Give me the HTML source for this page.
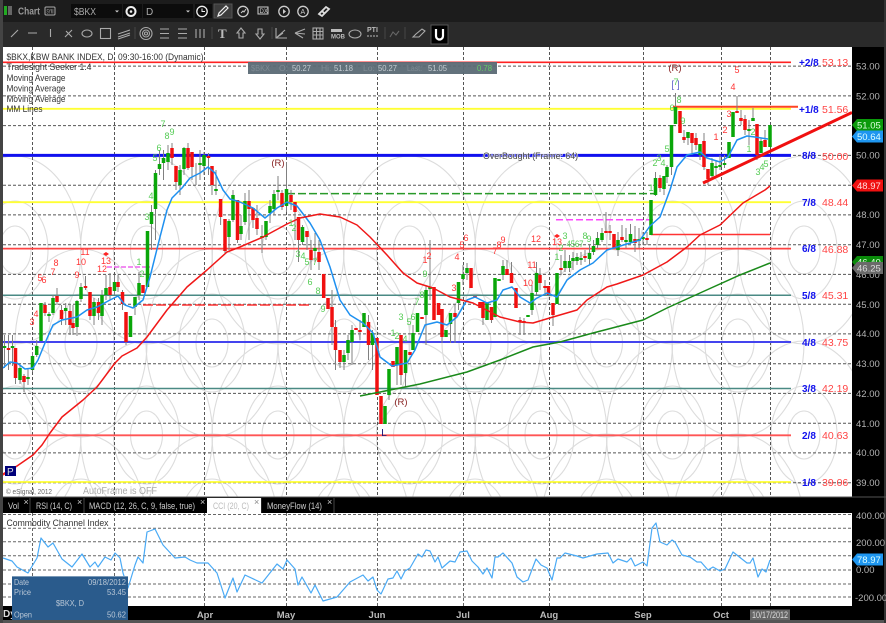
<!DOCTYPE html>
<html><head><meta charset="utf-8"><style>
html,body{margin:0;padding:0;background:#111;width:886px;height:623px;overflow:hidden}
svg{display:block;font-family:"Liberation Sans",sans-serif}
.r text{fill:#f33;font-size:9px;text-anchor:middle}
.g text{fill:#5c5;font-size:9px;text-anchor:middle}
.ax text{fill:#b4b4b4;font-size:9.5px}
.mm text{fill:#11e;font-size:10px;font-weight:bold}
.mv text{fill:#f44;font-size:10.5px}
.ic{fill:none;stroke:#aaa;stroke-width:1.1}
.leg text{fill:#333;font-size:9.5px}
.tab text{fill:#ccc;font-size:9px}
.tt text{fill:#b9c7d6;font-size:8.5px}
.q text{fill:#c4ccd2;font-size:8.5px}
.q .d{fill:#7f8b94}
</style></head><body>
<svg width="886" height="623" viewBox="0 0 886 623">
<rect width="886" height="623" fill="#000"/>
<rect width="886" height="22" fill="#1c1c1c"/>
<rect y="22" width="886" height="25" fill="#2a2a2a"/>
<rect y="620" width="886" height="3" fill="#555"/>
<rect x="0" y="0" width="3" height="623" fill="#444"/>
<rect x="884" y="0" width="2" height="623" fill="#333"/>
<!-- top row -->
<rect x="4" y="6" width="3" height="9" fill="#2a2"/><rect x="8" y="6" width="4" height="9" fill="#666"/>
<text x="18" y="14.500" fill="#999" font-size="10" font-weight="bold" textLength="22" lengthAdjust="spacingAndGlyphs">Chart</text>
<rect x="45" y="7" width="10" height="8" rx="1" fill="none" stroke="#aaa"/><text x="46.500" y="13.500" fill="#aaa" font-size="6" textLength="7" lengthAdjust="spacingAndGlyphs">SYM</text>
<rect x="71" y="4" width="51" height="14" fill="#0c0c0c"/><text x="74" y="15" fill="#aaa" font-size="10" textLength="22" lengthAdjust="spacingAndGlyphs">$BKX</text><path d="M115 10.500h4l-2 2z" fill="#ccc"/>
<rect x="123" y="4" width="19" height="14" fill="#0c0c0c"/>
<circle cx="131" cy="11.500" r="4.500" fill="none" stroke="#eee" stroke-width="2"/><circle cx="131" cy="11.500" r="1.300" fill="#eee"/>
<rect x="143" y="4" width="50" height="14" fill="#0c0c0c"/><text x="146" y="15" fill="#aaa" font-size="10">D</text><path d="M186 10.500h4l-2 2z" fill="#ccc"/>
<rect x="195" y="4" width="17" height="14" fill="#0c0c0c"/>
<circle cx="202" cy="11.500" r="5.200" fill="none" stroke="#eee" stroke-width="1.300"/><path d="M202 8.500v3h3" fill="none" stroke="#eee"/>
<rect x="214" y="4" width="18" height="14" fill="#3c3c3c" stroke="#555"/><path d="M218 16l1-3 7-7 2 2-7 7z" fill="none" stroke="#eee" stroke-width="1.200"/>
<circle cx="243" cy="11.500" r="5.200" fill="none" stroke="#ccc" stroke-width="1.300"/><path d="M241 13l2-2 1 1 2-3" fill="none" stroke="#ccc"/>
<rect x="258" y="7" width="10" height="7" fill="none" stroke="#ccc"/><text x="259.500" y="13" fill="#ccc" font-size="6">DX</text>
<circle cx="284" cy="11.500" r="5.200" fill="none" stroke="#ccc" stroke-width="1.300"/><path d="M283 9l3 2.500-3 2.500z" fill="#ccc"/>
<circle cx="303" cy="11.500" r="5.200" fill="none" stroke="#ccc" stroke-width="1.300"/><text x="300.500" y="14" fill="#ccc" font-size="7">A</text>
<path d="M319 14l3 2 7-7-3-2zM322 11l2 2" fill="none" stroke="#ddd" stroke-width="1.800"/>
<!-- second row -->
<g class="ic">
<path d="M11 37l7-7M28 33h9M50.500 29v8M65 37l7-7M66 31l6 6"/>
<ellipse cx="87" cy="33.500" rx="5" ry="3.500"/><rect x="100.500" y="28.500" width="10" height="10"/>
<path d="M118 37l12-4M118 34l12-4M118 39l12-4"/>
<circle cx="146" cy="33.500" r="6"/><circle cx="146" cy="33.500" r="3.500"/><circle cx="146" cy="33.500" r="1.500"/>
<path d="M160 29h9M160 33.500h9M160 38h9M178 29h9M178 33.500h9M178 38h9M196 29v9M200 29v9M204 29v9"/>
<path d="M241 28l4 5h-2v5h-4v-5h-2zM260 39l4-5h-2v-5h-4v5h-2z"/>
<path d="M276 28v10h11M276 38l9-8M276 38l7-5"/>
<path d="M295 33l10-4M295 33l10 1M295 33l8 5"/>
<rect x="313" y="28" width="10" height="11"/><path d="M313 31.500h10M313 35h10M316.500 28v11M320 28v11"/>
<ellipse cx="355" cy="34" rx="6" ry="4"/>
<path d="M390 37l3-5 3 3 3-4" stroke="#666"/><path d="M413 37l3-3 6-5 3 2-6 6z"/>
<path d="M135 27v12M212 27v12M272 27v12M385 27v12M405 27v12" stroke="#444"/>
</g>
<text x="218" y="38" fill="#bbb" font-size="13" font-family="Liberation Serif" font-weight="bold">T</text>
<rect x="331" y="29" width="11" height="3" fill="#bbb"/><text x="331" y="38.500" fill="#bbb" font-size="6" font-weight="bold">MOB</text>
<text x="367" y="32" fill="#bbb" font-size="7" font-weight="bold">PTI</text><path d="M367 36h12" stroke="#bbb" stroke-dasharray="2 1"/>
<rect x="431" y="25" width="17" height="19" fill="#000" stroke="#555"/><path d="M436 29v7a3.500 3.500 0 0 0 7 0v-7" fill="none" stroke="#fff" stroke-width="2.200"/>

<!-- panes -->
<rect x="3" y="47" width="849" height="450" fill="#fff"/>
<rect x="3" y="513" width="849" height="93" fill="#fff"/>
<clipPath id="c"><rect x="3" y="47" width="849" height="450"/></clipPath>
<g clip-path="url(#c)">
<!-- ellipses -->
<defs><g id="e"><ellipse rx="16" ry="24"/><ellipse rx="33" ry="49"/><ellipse rx="66" ry="94"/></g></defs>
<g fill="none" stroke="#dcdcdc" stroke-width="1.100">
<use href="#e" x="15" y="250"/><use href="#e" x="146.500" y="250"/><use href="#e" x="278" y="250"/><use href="#e" x="409.500" y="250"/><use href="#e" x="541" y="250"/><use href="#e" x="672.500" y="250"/><use href="#e" x="804" y="250"/>
<use href="#e" x="15" y="435"/><use href="#e" x="146.500" y="435"/><use href="#e" x="278" y="435"/><use href="#e" x="409.500" y="435"/><use href="#e" x="541" y="435"/><use href="#e" x="672.500" y="435"/><use href="#e" x="804" y="435"/>
<use href="#e" x="81" y="343"/><use href="#e" x="212" y="343"/><use href="#e" x="344" y="343"/><use href="#e" x="475" y="343"/><use href="#e" x="606.500" y="343"/><use href="#e" x="738" y="343"/>
<use href="#e" x="81" y="528"/><use href="#e" x="212" y="528"/><use href="#e" x="344" y="528"/><use href="#e" x="475" y="528"/><use href="#e" x="606.500" y="528"/><use href="#e" x="738" y="528"/>
</g>
<!-- grid -->
<path d="M3 66.100H852M3 95.900H852M3 125.600H852M3 155.400H852M3 185.200H852M3 214.900H852M3 244.700H852M3 274.400H852M3 304.200H852M3 333.900H852M3 363.700H852M3 393.400H852M3 423.200H852M3 452.900H852M3 482.700H852M32.500 47V497M114.500 47V497M204.500 47V497M286.500 47V497M377.500 47V497M463.500 47V497M549.500 47V497M643.500 47V497M721.500 47V497M770.500 47V497" stroke="#555" stroke-dasharray="3 2" fill="none"/>
<!-- MM lines -->
<g fill="none">
<path d="M3 62.300H791" stroke="#f22" stroke-width="1.600"/>
<path d="M3 108.800H791" stroke="#ff3" stroke-width="1.800"/>
<path d="M3 155.400H791" stroke="#11e" stroke-width="3"/>
<path d="M3 202.200H791" stroke="#ff3" stroke-width="1.800"/>
<path d="M3 248.600H791" stroke="#f44" stroke-width="1.800"/>
<path d="M3 295.300H791" stroke="#4a8a84" stroke-width="1.500"/>
<path d="M3 342H791" stroke="#44e" stroke-width="2"/>
<path d="M3 388.500H791" stroke="#4a8a84" stroke-width="1.500"/>
<path d="M3 435.300H791" stroke="#f55" stroke-width="1.800"/>
<path d="M3 482H791" stroke="#ff3" stroke-width="1.800"/>
<path d="M673 106.800H798" stroke="#f42" stroke-width="2"/>
<path d="M651 234.500H770" stroke="#f33" stroke-width="1.500"/>
<path d="M287 193.600H655" stroke="#2a9a2a" stroke-width="1.500" stroke-dasharray="8 3"/>
<path d="M556 219.800H655" stroke="#f4f" stroke-width="1.500" stroke-dasharray="7 3"/>
<path d="M107 267H150" stroke="#e6e" stroke-width="1.500" stroke-dasharray="5 2"/>
<path d="M143 305H312" stroke="#f33" stroke-width="1.500" stroke-dasharray="10 3"/>
</g>
<!-- wicks -->
<path fill="none" stroke="#808080" stroke-width="1" d="M4.500 335V368M8.500 335V370M12.500 335V366M15.500 348V384M20 365V384M24 374V392M28 368V385M32.500 352V372M36.700 340V357M45 302V316M49 312V322M53 295V315M57 288V305M61.500 305V325M65.700 303V325M70 305V335M73 305V335M77 300V336M81 283V302M85.500 276V290M90 292V320M94 298V325M98.500 298V320M102 290V325M106 275V300M110 273V300M114.500 275V295M118 275V292M122.500 290V310M126 312V345M135 297V315M139 272V300M151.500 205V250M155.500 170V240M159.500 150V175M163.500 150V180M168 145V170M172 143V165M176 166V190M180 165V195M184 147V175M188 143V170M192 152V180M196 163V185M200 150V180M204 152V175M208.500 153V175M212 166V195M216 170V195M220.600 199V225M225 219V253M229 219V250M233 190V222M237.500 200V243M241 215V240M245 193V225M249 190V240M253 208V228M257 205V235M262 225V253M266 221V240M270 200V223M274 190V215M278 176V200M282 190V210M286.500 162V212M291 190V210M295 202V240M298.500 217V262M302.500 225V245M307 231V250M311 240V270M315 233V262M319 240V270M332 290V345M335.500 320V370M340 350V368M344 350V370M348 335V360M352 325V365M360 320V340M368.500 315V360M372.500 330V370M385 406V424M389 369V400M397 347V385M401 335V385M405.500 350V387M413 325V350M426 285V345M430 240V300M442 309V343M450.500 313V343M455 305V343M458.500 282V310M463 265V285M467 263V280M483 302V325M491.500 307V323M503 260V280M507 260V275M511.500 262V283M520 317V335M524 318V335M532 285V315M536.500 262V295M540 268V290M545 280V295M553 303V326M561 255V275M565 250V272M569.500 255V272M573 252V270M577 253V265M581 252V265M585 250V262M589.500 245V265M593.500 240V255M597.500 232V248M602 228V242M606 212V232M610 225V240M614 234V248M618 232V256M622 225V242M626 228V248M630.500 224V245M635 226V252M639 228V248M643 232V245M647 232V245M655.500 172V196M660 175V192M664 176V195M667 165V183M671.500 125V175M675.500 93V124M684 130V143M688 132V145M692 133V155M696 133V150M700 144V160M704 133V170M708 169V185M712 158V180M716 160V175M720 155V170M724.500 155V168M737 96V113M741 110V125M745 115V135M749 120V145M753 108V121M757 124V160M761 138V153M765 130V147"/>
<!-- green bodies -->
<path fill="none" stroke="#09a609" stroke-width="3.500" d="M4.500 346V348M12.500 346V348M20 368V380M28 377V379M32.500 356V370M36.700 346V355M41 303V341M49 314V316M53 298V313M65.700 308V311M77 301V327M81 287V299M94 302V316M102 295V316M106 288V295M114.500 282V291M130.500 316V337M135 297V307M139 283V295M147.500 231V287M151.500 212V224M155.500 173V209M159.500 164V169M163.500 158V163M168 153V162M180 170V185M184 148V169M200 163V165M204 155V166M216 189V191M229 221V237M233 195V220M241 226V234M245 201V222M262 236V238M266 221V237M270 206V213M274 194V209M278 190V192M286.500 189V206M302.500 227V242M315 248V251M344 355V362M348 340V353M352 330V342M364 313V327M372.500 333V345M385 406V424M389 369V395M397 347V365M405.500 350V373M413 333V350M417.500 313V332M426 290V315M430 287V289M446 330V337M450.500 313V324M458.500 282V303M463 274V279M467 268V273M487 303V320M495 278V317M499 279V281M503 266V275M528 315V317M532 293V310M536.500 273V292M557 273V304M565 261V268M569.500 261V268M573 258V261M577 257V261M581 258V260M589.500 253V259M593.500 246V252M597.500 238V245M602 233V240M618 240V250M626 240V242M630.500 234V242M639 239V241M643 237V239M651 200V235M655.500 178V195M664 176V189M667 167V177M671.500 125V167M675.500 107V124M688 132V138M700 144V155M712 163V176M716 166V168M720 165V167M724.500 163V165M729 142V158M733 112V137M749 129V131M753 118V121M761 141V153M770 125V147"/>
<!-- red bodies -->
<path fill="none" stroke="#f01010" stroke-width="3.500" d="M8.500 348V350M15.500 348V378M24 376V382M45 305V313M57 296V302M61.500 310V319M70 311V325M73 323V328M85.500 286V288M90 292V316M98.500 302V313M110 287V295M118 282V287M122.500 292V304M126 312V342M143 285V293M172 148V158M176 166V182M188 148V168M192 152V167M208.500 156V158M212 166V185M220.600 199V217M225 219V251M237.500 200V240M249 201V209M253 208V220M257 218V229M282 193V207M291 195V202M295 202V212M298.500 217V240M307 231V237M311 250V260M319 252V262M323.700 274V298M328 298V309M332 307V327M335.500 327V350M340 350V362M356 328V330M360 330V332M368.500 322V345M377 338V395M381 396V424M393 361V367M401 335V375M410 352V355M422 317V319M434 287V320M438.500 303V315M442 309V337M455 313V317M471 268V288M475 296V298M480 302V308M483 302V318M491.500 307V320M507 269V275M511.500 273V283M516 288V308M520 320V322M524 321V323M540 275V283M545 286V288M548.500 286V295M553 303V315M561 268V270M585 256V258M606 231V233M610 231V233M614 234V248M622 237V240M635 239V243M647 238V240M660 178V188M680 111V133M684 137V140M692 133V143M696 138V145M704 141V167M708 169V179M737 111V113M741 118V121M745 119V130M757 124V155M765 140V147"/>
<!-- MAs -->
<path fill="none" stroke="#1e90f0" stroke-width="1.500" stroke-linejoin="round" d="M3 368L10 362L17 363L25 369L33 368L38 360L45 343L53 325L62 320L77 317L87 310L97 307L110 300L118 296L125 305L133 308L143 300L150 277L160 237L167 210L172 198L182 188L190 178L200 173L208 167L215 173L223 190L230 199L240 202L253 208L265 218L277 208L287 202L297 206L310 223L320 240L330 267L340 300L350 315L363 323L373 333L380 357L392 366L407 363L415 350L425 325L437 322L447 325L457 317L467 300L475 297L487 303L497 300L503 290L512 287L520 297L530 303L537 298L547 293L557 297L567 280L580 270L593 263L607 250L617 247L640 240L650 226L660 217L670 190L677 167L687 155L700 152L707 158L720 162L728 157L737 140L747 136L755 137L768 139"/>
<path fill="none" stroke="#f01818" stroke-width="1.500" stroke-linejoin="round" d="M3 474L17 466L33 455L42 445L50 433L62 417L83 400L97 387L115 363L122 356L137 348L147 337L167 310L187 287L207 270L227 252L240 247L263 237L287 224L300 218L320 214L340 217L357 225L370 237L387 255L403 273L417 283L433 288L450 297L473 303L500 317L520 322L533 323L553 317L577 310L587 300L607 287L617 284L643 275L667 262L687 247L700 235L720 225L743 203L765 190L770 186"/>
<path fill="none" stroke="#1a8a1a" stroke-width="1.500" d="M360 396L420 384L467 372L500 360L533 347L560 342L593 333L643 320L667 308L700 293L740 275L770 263"/>
<path fill="none" stroke="#f01010" stroke-width="3" d="M703 183L852 112.500"/>
<path d="M106 252l3 2-3 2-3-2zM557 234l3 2-3 2-3-2z" fill="#f22"/>
<!-- numbers -->
<g class="r">
<text x="32" y="325">3</text><text x="36" y="317">4</text><text x="40" y="281">5</text><text x="44" y="283">6</text><text x="53" y="275">7</text><text x="56" y="266">8</text><text x="77" y="278">9</text><text x="81" y="265">10</text><text x="85" y="255">11</text><text x="102" y="272">12</text><text x="106" y="264">13</text>
<text x="425" y="263">1</text><text x="429" y="259">2</text><text x="454" y="291">3</text><text x="457" y="260">4</text><text x="462" y="248">5</text><text x="466" y="241">6</text><text x="495" y="254">7</text><text x="499" y="248">8</text><text x="503" y="243">9</text><text x="528" y="286">10</text><text x="532" y="268">11</text><text x="536" y="242">12</text><text x="557" y="245">13</text>
<text x="716" y="140">1</text><text x="725" y="133">2</text><text x="729" y="117">3</text><text x="733" y="90">4</text><text x="737" y="73">5</text>
</g>
<g class="g">
<text x="139" y="265">1</text><text x="142" y="277">2</text><text x="147" y="220">3</text><text x="151" y="199">4</text><text x="155" y="161">5</text><text x="159" y="151">6</text><text x="163" y="127">7</text><text x="167" y="139">8</text><text x="172" y="135">9</text>
<text x="291" y="226">1</text><text x="294" y="231">2</text><text x="298" y="257">3</text><text x="303" y="259">4</text><text x="307" y="265">5</text><text x="315" y="265">7</text><text x="310" y="285">6</text><text x="318" y="294">8</text><text x="323" y="312">9</text>
<text x="393" y="336">1</text><text x="397" y="339">2</text><text x="401" y="320">3</text><text x="405" y="342">4</text><text x="409" y="325">5</text><text x="413" y="320">6</text><text x="417" y="305">7</text><text x="422" y="298">8</text><text x="425" y="277">9</text>
<text x="557" y="260">1</text><text x="561" y="251">2</text><text x="565" y="239">3</text><text x="575" y="247" textLength="17" lengthAdjust="spacingAndGlyphs">4567</text><text x="585" y="239">8</text><text x="589" y="242">9</text>
<text x="651" y="191">1</text><text x="655" y="166">2</text><text x="659" y="161">3</text><text x="663" y="166">4</text><text x="667" y="152">5</text><text x="672" y="111">6</text><text x="676" y="85">7</text><text x="679" y="103">8</text><text x="683" y="124">9</text>
<text x="749" y="152">1</text><text x="753" y="135">2</text><text x="758" y="175">3</text><text x="762" y="170">4</text><text x="766" y="167">5</text>
</g>
<text x="675" y="71" fill="#822" font-size="9.500" text-anchor="middle">(R)</text>
<text x="278" y="166" fill="#822" font-size="9.500" text-anchor="middle">(R)</text>
<text x="401" y="405" fill="#822" font-size="9.500" text-anchor="middle">(R)</text>
<text x="384" y="436" fill="#117" font-size="10" text-anchor="middle">L</text>
<text x="675.500" y="88" fill="#66c" font-size="10" text-anchor="middle">[ ]</text>
<!-- OverBought -->
<text x="483" y="159" fill="#444" font-size="9.500" textLength="95" lengthAdjust="spacingAndGlyphs" stroke="#fff" stroke-width="1.500" paint-order="stroke" stroke-opacity=".7">OverBought (Frame: 64)</text>
<!-- Quote bar -->
<rect x="248" y="62" width="249" height="12" fill="#5b6a75" fill-opacity=".95"/>
<g class="q"><text class="d" x="251" y="71" textLength="19" lengthAdjust="spacingAndGlyphs">$BKX</text><text class="d" x="279" y="71">O:</text><text x="292" y="71" textLength="19" lengthAdjust="spacingAndGlyphs">50.27</text><text class="d" x="321" y="71">Hi:</text><text x="334" y="71" textLength="19" lengthAdjust="spacingAndGlyphs">51.18</text><text class="d" x="363" y="71">Lo:</text><text x="378" y="71" textLength="19" lengthAdjust="spacingAndGlyphs">50.27</text><text class="d" x="407" y="71" textLength="15" lengthAdjust="spacingAndGlyphs">Last:</text><text x="428" y="71" textLength="19" lengthAdjust="spacingAndGlyphs">51.05</text><text x="477" y="71" style="fill:#6c6" textLength="15" lengthAdjust="spacingAndGlyphs">0.78</text></g>
<!-- legend -->
<g class="leg">
<text x="6.500" y="60" textLength="197" lengthAdjust="spacingAndGlyphs">$BKX,KBW BANK INDEX, D, 09:30-16:00 (Dynamic)</text>
<text x="6.500" y="70" textLength="85" lengthAdjust="spacingAndGlyphs">Tradesight Seeker 1.4</text>
<text x="6.500" y="81" textLength="59" lengthAdjust="spacingAndGlyphs">Moving Average</text>
<text x="6.500" y="91.500" textLength="59" lengthAdjust="spacingAndGlyphs">Moving Average</text>
<text x="6.500" y="102" textLength="59" lengthAdjust="spacingAndGlyphs">Moving Average</text>
<text x="6.500" y="112" textLength="36" lengthAdjust="spacingAndGlyphs">MM Lines</text>
</g>
<!-- P + copyright -->
<path d="M3 475L17 466" stroke="#f22" stroke-width="1.500"/>
<rect x="5" y="466" width="11" height="10" fill="#00007a"/><text x="7" y="475" fill="#ddd" font-size="10">P</text>
<text x="6" y="494" fill="#666" font-size="7.500" textLength="46" lengthAdjust="spacingAndGlyphs">© eSignal, 2012</text>
<text x="83" y="494" fill="#aaa" font-size="10" textLength="74" lengthAdjust="spacingAndGlyphs">AutoFrame is OFF</text>
</g>
<!-- MM labels -->
<g class="mm">
<text x="799" y="66">+2/8</text><text x="799" y="113">+1/8</text><text x="802" y="159">8/8</text><text x="802" y="206">7/8</text><text x="802" y="252">6/8</text><text x="802" y="299">5/8</text><text x="802" y="346">4/8</text><text x="802" y="392">3/8</text><text x="802" y="439">2/8</text><text x="802" y="486">1/8</text>
</g>
<g class="mv">
<text x="822" y="66">53.13</text><text x="822" y="113">51.56</text><text x="822" y="160">50.00</text><text x="822" y="206">48.44</text><text x="822" y="253">46.88</text><text x="822" y="299">45.31</text><text x="822" y="346">43.75</text><text x="822" y="392">42.19</text><text x="822" y="439">40.63</text><text x="822" y="486">39.06</text>
</g>
<!-- axis -->
<g class="ax">
<text x="856" y="69.500">53.00</text><text x="856" y="99.500">52.00</text><text x="856" y="158.500">50.00</text><text x="856" y="218">48.00</text><text x="856" y="248">47.00</text><text x="856" y="278">46.00</text><text x="856" y="308">45.00</text><text x="856" y="337">44.00</text><text x="856" y="367">43.00</text><text x="856" y="397">42.00</text><text x="856" y="427">41.00</text><text x="856" y="456">40.00</text><text x="856" y="486">39.00</text>
<text x="856" y="519">400.00</text><text x="856" y="546">200.00</text><text x="856" y="573">0.00</text><text x="855" y="601">-200.00</text>
</g>
<g font-size="9.500">
<path d="M852 125l5-6h26v12h-26z" fill="#0a9a0a"/><text x="857" y="128.500" fill="#dfd">51.05</text>
<path d="M852 136.500l5-6h26v12h-26z" fill="#1e96f0"/><text x="857" y="140" fill="#dff">50.64</text>
<path d="M852 185.500l5-6h26v12h-26z" fill="#f01010"/><text x="857" y="189" fill="#fdd">48.97</text>
<path d="M852 262l5-6h26v12h-26z" fill="#0a8a0a"/><text x="857" y="265.500" fill="#dfd">46.40</text>
<path d="M852 268l5-6h26v12h-26z" fill="#6a6a6a"/><text x="857" y="271.500" fill="#ddd">46.25</text>
<path d="M852 559.500l5-6h26v12h-26z" fill="#1e96f0"/><text x="857" y="563" fill="#dff">78.97</text>
</g>
<!-- tabs -->
<rect x="3" y="497" width="849" height="16" fill="#000"/>
<path d="M3 497H886" stroke="#555"/>
<path d="M30 498v15M84 498v15M261 498v15M334 498v15" stroke="#444"/>
<rect x="207" y="498" width="54" height="15" fill="#fff"/>
<g class="tab">
<text x="8" y="509" textLength="11" lengthAdjust="spacingAndGlyphs">Vol</text><text x="36" y="509" textLength="36" lengthAdjust="spacingAndGlyphs">RSI (14, C)</text><text x="89" y="509" textLength="106" lengthAdjust="spacingAndGlyphs">MACD (12, 26, C, 9, false, true)</text><text x="213" y="509" style="fill:#bbb" textLength="36" lengthAdjust="spacingAndGlyphs">CCI (20, C)</text><text x="267" y="509" textLength="55" lengthAdjust="spacingAndGlyphs">MoneyFlow (14)</text>
<text x="23.500" y="505" font-size="7">×</text><text x="77" y="505" font-size="7">×</text><text x="200" y="505" font-size="7">×</text><text x="254" y="505" font-size="7" style="fill:#888">×</text><text x="327" y="505" font-size="7">×</text>
</g>
<!-- lower pane -->
<path d="M3 514.500H852M3 528.300H852M3 541.700H852M3 555.700H852M3 570H852M3 584H852M3 597H852M32.500 513V606M114.500 513V606M204.500 513V606M286.500 513V606M377.500 513V606M463.500 513V606M549.500 513V606M643.500 513V606M721.500 513V606M770.500 513V606" stroke="#666" stroke-dasharray="3 2" fill="none"/>
<text x="6.500" y="526" fill="#333" font-size="9.500" textLength="102" lengthAdjust="spacingAndGlyphs">Commodity Channel Index</text>
<path fill="none" stroke="#4aaaf5" stroke-width="1.200" stroke-linejoin="round" d="M3 558L12 561L17 567L28 573L37 558L41 538L48 547L53 543L62 559L72 567L82 554L90 567L95 562L98 567L105 557L111 560L115 553L120 558L123 573L128 588L135 565L138 557L143 563L147 532L155 529L163 545L175 558L185 557L190 560L197 563L208 563L217 573L225 598L233 578L237 592L245 575L262 583L277 564L283 569L287 560L295 569L298 585L302 577L311 593L315 585L323 601L337 597L350 582L363 575L368 581L373 577L377 590L381 594L388 579L393 578L397 571L401 579L405 571L410 568L418 554L422 557L426 550L430 551L435 562L438 557L442 568L450 561L455 562L460 552L467 551L472 561L478 567L483 574L487 568L492 578L495 557L498 557L503 553L512 563L517 577L523 582L528 580L536 559L541 565L547 568L552 580L557 558L560 558L565 553L577 556L583 558L597 554L608 553L613 563L618 559L627 562L631 558L635 566L643 562L647 566L652 528L656 523L660 542L667 545L672 540L675 542L682 555L690 557L697 562L701 562L708 570L713 567L720 571L725 569L733 552L747 563L750 563L753 558L758 577L762 569L766 572L770 560"/>
<!-- time axis -->
<text x="3" y="617" fill="#ddd" font-size="10" font-weight="bold">Dy</text>
<g fill="#bbb" font-size="9.500" font-weight="bold" text-anchor="middle">
<text x="205" y="618">Apr</text><text x="286" y="618">May</text><text x="377" y="618">Jun</text><text x="463" y="618">Jul</text><text x="549" y="618">Aug</text><text x="643" y="618">Sep</text><text x="721" y="618">Oct</text>
</g>
<rect x="750" y="609.500" width="40" height="10.500" fill="#666"/><text x="752" y="618" fill="#ddd" font-size="9" textLength="36" lengthAdjust="spacingAndGlyphs">10/17/2012</text>
<!-- tooltip -->
<rect x="12" y="577" width="116" height="43" fill="#2a5b8c"/>
<path d="M12 576.500H128" stroke="#7a9ab8"/>
<g class="tt">
<text x="14" y="585" textLength="15" lengthAdjust="spacingAndGlyphs">Date</text><text x="88" y="585" textLength="38" lengthAdjust="spacingAndGlyphs">09/18/2012</text>
<text x="14" y="595" textLength="17" lengthAdjust="spacingAndGlyphs">Price</text><text x="107" y="595" textLength="19" lengthAdjust="spacingAndGlyphs">53.45</text>
<text x="56" y="606" textLength="28" lengthAdjust="spacingAndGlyphs">$BKX, D</text>
<text x="14" y="617.500" textLength="18" lengthAdjust="spacingAndGlyphs">Open</text><text x="107" y="617.500" textLength="19" lengthAdjust="spacingAndGlyphs">50.62</text>
</g>
</svg>
</body></html>
